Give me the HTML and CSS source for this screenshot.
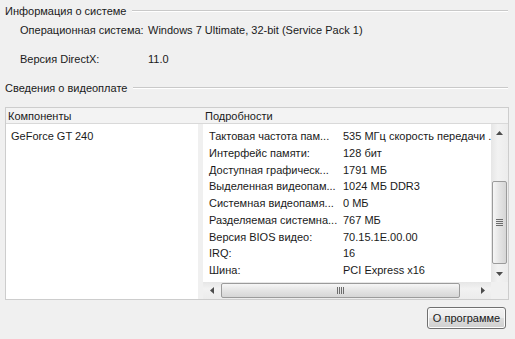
FILE: index.html
```html
<!DOCTYPE html>
<html lang="ru">
<head>
    <meta charset="UTF-8">
    <title>Информация о системе</title>
    <link rel="stylesheet" href="styles.css">
</head>
<body>
    <div class="dialog">
        <div class="group"><span>Информация о системе</span></div>
        <div class="info">
            <div class="info-row"><span class="info-label">Операционная система:</span><span>Windows 7 Ultimate, 32-bit (Service Pack 1)</span></div>
            <div class="info-row"><span class="info-label">Версия DirectX:</span><span>11.0</span></div>
        </div>

        <div class="group"><span>Сведения о видеоплате</span></div>
        <div class="panel">
            <div class="panel-head">
                <div class="head-left">Компоненты</div>
                <div class="head-right">Подробности</div>
            </div>
            <div class="panel-body">
                <ul class="components">
                    <li>GeForce GT 240</li>
                </ul>
                <div class="details">
                    <div class="details-main">
                        <div class="rows">
                            <div class="row"><span class="key">Тактовая частота пам...</span><span class="val">535 МГц скорость передачи ...</span></div>
                            <div class="row"><span class="key">Интерфейс памяти:</span><span class="val">128 бит</span></div>
                            <div class="row"><span class="key">Доступная графическ...</span><span class="val">1791 МБ</span></div>
                            <div class="row"><span class="key">Выделенная видеопам...</span><span class="val">1024 МБ DDR3</span></div>
                            <div class="row"><span class="key">Системная видеопамя...</span><span class="val">0 МБ</span></div>
                            <div class="row"><span class="key">Разделяемая системна...</span><span class="val">767 МБ</span></div>
                            <div class="row"><span class="key">Версия BIOS видео:</span><span class="val">70.15.1E.00.00</span></div>
                            <div class="row"><span class="key">IRQ:</span><span class="val">16</span></div>
                            <div class="row"><span class="key">Шина:</span><span class="val">PCI Express x16</span></div>
                        </div>
                        <div class="vscroll">
                            <div class="sb-btn">
                                <svg width="7" height="4" viewBox="0 0 7 4"><path d="M0 4 L3.5 0 L7 4 Z" fill="#4d4d4d"/></svg>
                            </div>
                            <div class="sb-track">
                                <div class="thumb thumb-v"><span class="grip-v"></span></div>
                            </div>
                            <div class="sb-btn">
                                <svg width="7" height="4" viewBox="0 0 7 4"><path d="M0 0 L3.5 4 L7 0 Z" fill="#4d4d4d"/></svg>
                            </div>
                        </div>
                    </div>
                    <div class="hscroll-row">
                        <div class="hscroll">
                            <div class="sb-btn">
                                <svg width="4" height="7" viewBox="0 0 4 7"><path d="M4 0 L0 3.5 L4 7 Z" fill="#4d4d4d"/></svg>
                            </div>
                            <div class="sb-track">
                                <div class="thumb thumb-h"><span class="grip-h"></span></div>
                            </div>
                            <div class="sb-btn">
                                <svg width="4" height="7" viewBox="0 0 4 7"><path d="M0 0 L4 3.5 L0 7 Z" fill="#4d4d4d"/></svg>
                            </div>
                        </div>
                        <div class="corner"></div>
                    </div>
                </div>
            </div>
        </div>

        <div class="actions">
            <button class="btn">О программе</button>
        </div>
    </div>
</body>
</html>
```

FILE: styles.css
```css
body {
    margin: 0;
    background: #f0f0f0;
    font-family: "Liberation Sans", Arial, sans-serif;
    font-size: 11px;
    color: #1a1a1a;
}

.dialog {
    width: 515px;
    height: 339px;
    overflow: hidden;
}

/* group box captions with etched line */
.group {
    display: flex;
    align-items: center;
    height: 22px;
    padding: 0 7px 0 5px;
}

.group span {
    padding-right: 6px;
}

.group::after {
    content: "";
    flex: 1;
    border-top: 1px solid #c9c9c9;
    border-bottom: 1px solid #ffffff;
}

.info {
    display: flex;
    flex-direction: column;
    gap: 13px;
    padding-left: 20px;
    margin-bottom: 10px;
}

.info-row {
    display: flex;
    align-items: center;
    height: 16px;
}

.info-label {
    width: 128px;
}

/* list panel */
.panel {
    margin: 8px 6px 0 5px;
    border: 1px solid #cdcdcd;
    height: 191px;
    display: flex;
    flex-direction: column;
}

.panel-head {
    display: flex;
    align-items: center;
    height: 16px;
    background: #f3f3f3;
    border-bottom: 1px solid #d9d9d9;
}

.head-left {
    width: 195px;
    padding-left: 2px;
}

.head-right {
    padding-left: 2px;
}

.panel-body {
    flex: 1;
    display: flex;
    gap: 5px;
}

.components {
    list-style: none;
    margin: 0;
    padding: 4px 0 0 5px;
    width: 187px;
    background: #ffffff;
}

.components li {
    height: 16px;
    line-height: 16px;
}

.details {
    flex: 1;
    display: flex;
    flex-direction: column;
    min-width: 0;
}

.details-main {
    flex: 1;
    display: flex;
    min-height: 0;
}

.rows {
    flex: 1;
    background: #ffffff;
    padding: 4px 0 0 6px;
    overflow: hidden;
    min-width: 0;
}

.row {
    display: flex;
    height: 16.75px;
    line-height: 16.75px;
    white-space: nowrap;
}

.key {
    flex: 0 0 134px;
}

.val {
    overflow: hidden;
}

/* scrollbars */
.vscroll {
    width: 17px;
    display: flex;
    flex-direction: column;
    background: linear-gradient(to right, #e6e6e6, #f2f2f2 40%, #ececec);
}

.vscroll .sb-btn {
    height: 17px;
}

.sb-btn {
    display: flex;
    align-items: center;
    justify-content: center;
}

.sb-track {
    flex: 1;
    display: flex;
}

.vscroll .sb-track {
    flex-direction: column;
    padding: 40px 1px 1px;
}

.thumb {
    border: 1px solid #9b9b9b;
    border-radius: 2px;
    display: flex;
    align-items: center;
    justify-content: center;
}

.thumb-v {
    height: 81px;
    background: linear-gradient(to right, #f6f6f6, #e4e4e4 50%, #d6d6d6);
}

.grip-v {
    width: 7px;
    height: 7px;
    background: repeating-linear-gradient(to bottom, #6c6c6c 0 1px, transparent 1px 2px);
}

.hscroll-row {
    display: flex;
    height: 17px;
}

.hscroll {
    flex: 1;
    display: flex;
    background: linear-gradient(to bottom, #e6e6e6, #f2f2f2 40%, #ececec);
}

.hscroll .sb-btn {
    width: 17px;
}

.hscroll .sb-track {
    padding: 1px 14px 1px 1px;
}

.thumb-h {
    flex: 1;
    background: linear-gradient(to bottom, #f6f6f6, #e4e4e4 50%, #d6d6d6);
}

.grip-h {
    width: 7px;
    height: 7px;
    background: repeating-linear-gradient(to right, #6c6c6c 0 1px, transparent 1px 2px);
}

.corner {
    width: 17px;
    background: #f0f0f0;
}

.actions {
    display: flex;
    justify-content: flex-end;
    padding: 7px 9px 0 0;
}

.btn {
    width: 79px;
    height: 22px;
    padding: 0;
    font: inherit;
    color: #1a1a1a;
    border: 1px solid #707070;
    border-radius: 3px;
    background: linear-gradient(to bottom, #f2f2f2 0%, #ebebeb 50%, #dddddd 51%, #cfcfcf 100%);
    box-shadow: inset 0 0 0 1px #fcfcfc;
}
```
